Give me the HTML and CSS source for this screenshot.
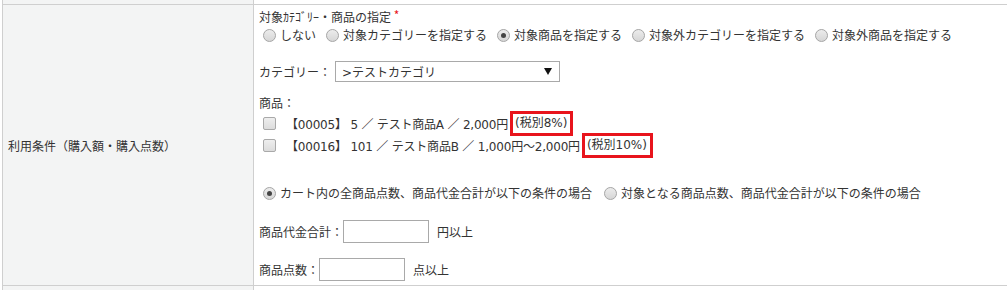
FILE: index.html
```html
<!DOCTYPE html>
<html lang="ja">
<head>
<meta charset="utf-8">
<title>利用条件</title>
<link rel="stylesheet" href="styles.css">
</head>
<body>
<table class="form">
  <tr class="row-prev"><th></th><td></td></tr>
  <tr class="row-main">
    <th>利用条件（購入額・購入点数）</th>
    <td>
      <div class="title">対象ｶﾃｺﾞﾘｰ・商品の指定 <span class="req">*</span></div>
      <div class="opts">
        <label class="opt"><span class="radio"></span>しない</label>
        <label class="opt"><span class="radio"></span>対象カテゴリーを指定する</label>
        <label class="opt"><span class="radio checked"></span>対象商品を指定する</label>
        <label class="opt"><span class="radio"></span>対象外カテゴリーを指定する</label>
        <label class="opt"><span class="radio"></span>対象外商品を指定する</label>
      </div>
      <div class="cat">
        <span class="lbl">カテゴリー：</span>
        <div class="select"><span>&gt;テストカテゴリ</span><span class="arrow"></span></div>
      </div>
      <div class="products-title">商品：</div>
      <div class="prod"><span class="check"></span><span class="ptext">【00005】 5 ／ テスト商品A ／ 2,000円</span><span class="tax">(税別8%)</span></div>
      <div class="prod"><span class="check"></span><span class="ptext">【00016】 101 ／ テスト商品B ／ 1,000円～2,000円</span><span class="tax">(税別10%)</span></div>
      <div class="opts opts2">
        <label class="opt"><span class="radio checked"></span>カート内の全商品点数、商品代金合計が以下の条件の場合</label>
        <label class="opt"><span class="radio"></span>対象となる商品点数、商品代金合計が以下の条件の場合</label>
      </div>
      <div class="amount first"><span class="lbl">商品代金合計：</span><span class="input"></span><span class="unit">円以上</span></div>
      <div class="amount"><span class="lbl">商品点数：</span><span class="input"></span><span class="unit">点以上</span></div>
    </td>
  </tr>
  <tr class="row-next"><th></th><td></td></tr>
</table>
</body>
</html>
```

FILE: styles.css
```css
html, body {
  margin: 0;
  padding: 0;
  background: #fff;
  overflow: hidden;
}
body {
  font-family: "Noto Sans CJK JP", sans-serif;
  font-size: 12px;
  color: #333;
}
.form {
  border-collapse: collapse;
  margin: 0 0 0 2px;
  width: 1020px;
  table-layout: fixed;
}
.form th, .form td {
  border: 1px solid #cfcfcf;
  padding: 0;
}
.form th {
  background: #f3f4f4;
  font-weight: normal;
  text-align: left;
  padding-left: 5px;
  vertical-align: middle;
  box-sizing: border-box;
  width: 251px;
}
.form td {
  background: #fff;
  padding: 3px 5px 4px 5px;
  vertical-align: top;
}
.row-prev th, .row-prev td {
  height: 4px;
  padding: 0;
  border-top: none;
}
.row-next th, .row-next td { height: 4px; padding: 0; }
.row-main th { color: #333; }

.title { line-height: 18px; height: 18px; }
.req { color: #e8141c; font-size: 12px; vertical-align: top; line-height: 14px; }

.opts { display: flex; align-items: center; height: 18px; line-height: 18px; }
.opt { display: inline-flex; align-items: center; margin-right: 6px; }
.radio {
  width: 11px; height: 11px;
  border: 1px solid #a6a6a6;
  border-radius: 50%;
  background: linear-gradient(#ececec, #d6d6d6);
  margin: 0 4px 0 4px;
  position: relative;
  flex: none;
}
.radio.checked::after {
  content: "";
  position: absolute;
  left: 3px; top: 3px;
  width: 5px; height: 5px;
  border-radius: 50%;
  background: #444;
}

.cat { display: flex; align-items: center; margin-top: 17px; height: 21px; }
.cat .lbl { width: 76px; }
.select {
  height: 19px;
  width: 210px;
  border: 1px solid #a9a9a9;
  background: #fff;
  display: flex; align-items: center; justify-content: space-between;
  padding: 0 7px 0 6px;
  font-family: "DejaVu Sans", "Noto Sans CJK JP", sans-serif;
}
.arrow {
  width: 0; height: 0;
  border-left: 4px solid transparent;
  border-right: 4px solid transparent;
  border-top: 7px solid #111;
}

.products-title { margin-top: 12px; line-height: 18px; }
.prod {
  display: flex; align-items: center; height: 22px;
  font-family: "DejaVu Sans", "Noto Sans CJK JP", sans-serif;
}
.check {
  width: 11px; height: 11px;
  border: 1px solid #a9a9a9;
  border-radius: 2px;
  background: linear-gradient(#eeeeee, #dcdcdc);
  margin: 0 10px 0 4px;
  flex: none;
}
.ptext { white-space: pre; letter-spacing: -0.2px; }
.tax {
  border: 3px solid #e8141c;
  padding: 0 3px 0 2px;
  line-height: 19px;
  margin-left: 2px;
}

.opts2 { margin-top: 28px; }
.opts2 .opt { margin-right: 8px; }

.amount { display: flex; align-items: center; height: 23px; margin-top: 15px; }
.amount.first { margin-top: 18px; }
.input {
  width: 84px; height: 21px;
  border: 1px solid #a9a9a9;
  background: #fff;
  margin-right: 8px;
}
```
